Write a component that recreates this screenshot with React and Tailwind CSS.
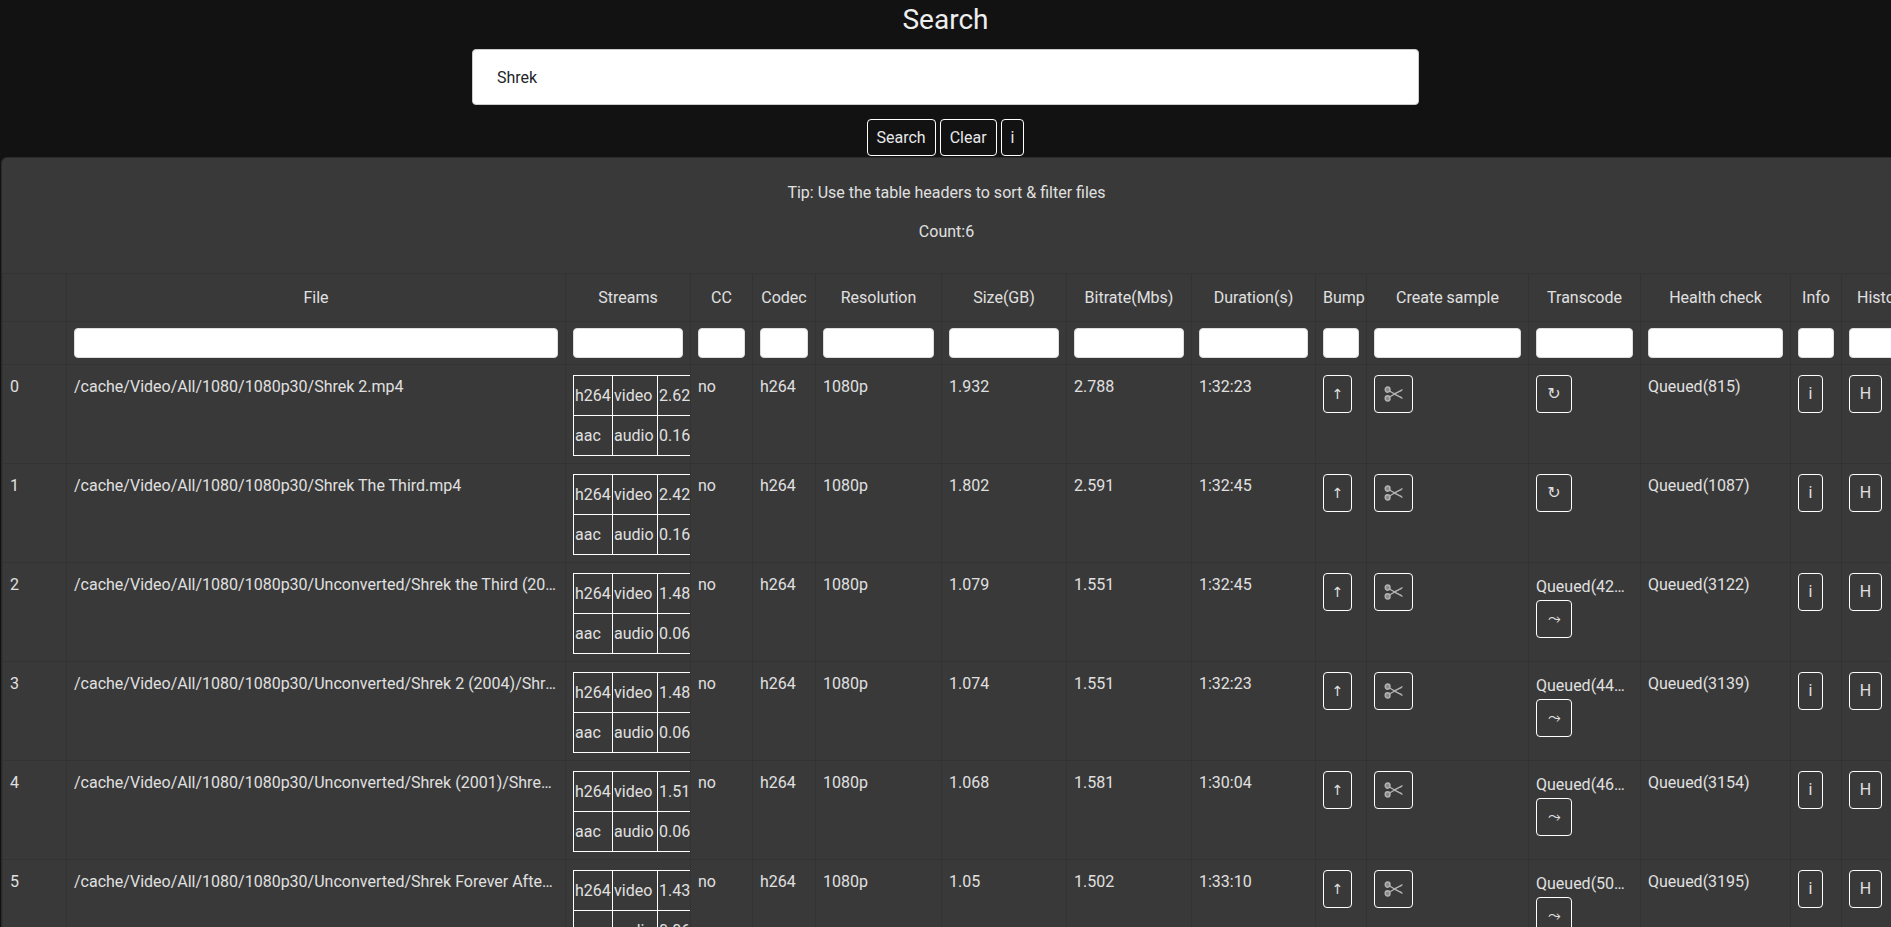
const sans = "font-['Roboto',sans-serif]";

const columns = [
  { name: "", width: "w-[64px]" },
  { name: "File", width: "w-[499px]" },
  { name: "Streams", width: "w-[125px]" },
  { name: "CC", width: "w-[62px]" },
  { name: "Codec", width: "w-[63px]" },
  { name: "Resolution", width: "w-[126px]" },
  { name: "Size(GB)", width: "w-[125px]" },
  { name: "Bitrate(Mbs)", width: "w-[125px]" },
  { name: "Duration(s)", width: "w-[124px]" },
  { name: "Bump", width: "w-[51px]" },
  { name: "Create sample", width: "w-[162px]" },
  { name: "Transcode", width: "w-[112px]" },
  { name: "Health check", width: "w-[150px]" },
  { name: "Info", width: "w-[51px]" },
  { name: "History", width: "w-[82px]" },
];

const files = [
  { file: "/cache/Video/All/1080/1080p30/Shrek 2.mp4", video: "2.624", audio: "0.160", size: "1.932", rate: "2.788", time: "1:32:23", health: "Queued(815)" },
  { file: "/cache/Video/All/1080/1080p30/Shrek The Third.mp4", video: "2.424", audio: "0.160", size: "1.802", rate: "2.591", time: "1:32:45", health: "Queued(1087)" },
  { file: "/cache/Video/All/1080/1080p30/Unconverted/Shrek the Third (2007)/Shrek the Third.mp4", video: "1.482", audio: "0.064", size: "1.079", rate: "1.551", time: "1:32:45", queue: "Queued(4231)", health: "Queued(3122)" },
  { file: "/cache/Video/All/1080/1080p30/Unconverted/Shrek 2 (2004)/Shrek 2.mp4", video: "1.482", audio: "0.064", size: "1.074", rate: "1.551", time: "1:32:23", queue: "Queued(4420)", health: "Queued(3139)" },
  { file: "/cache/Video/All/1080/1080p30/Unconverted/Shrek (2001)/Shrek.mp4", video: "1.514", audio: "0.064", size: "1.068", rate: "1.581", time: "1:30:04", queue: "Queued(4618)", health: "Queued(3154)" },
  { file: "/cache/Video/All/1080/1080p30/Unconverted/Shrek Forever After (2010)/Shrek.mp4", video: "1.432", audio: "0.064", size: "1.05", rate: "1.502", time: "1:33:10", queue: "Queued(5012)", health: "Queued(3195)" },
];

const Scissors = () => (
  <svg width="20" height="16" viewBox="0 0 20 16" fill="none" stroke="#b4b4b4" strokeWidth="1.4" aria-hidden="true">
    <ellipse cx="3.6" cy="3.6" rx="2.4" ry="2.6" fill="#8a8a8a" />
    <ellipse cx="3.6" cy="12.4" rx="2.4" ry="2.6" fill="#8a8a8a" />
    <path d="M5.5 5 L18.5 12.5 M5.5 11 L18.5 3.5" />
    <path d="M9 8 L18 4.6 M9 8 L18 11.4" strokeWidth="0.8" />
  </svg>
);

const IconButton = ({ width, children, className = "" }) => (
  <button type="button" className={`flex h-[38px] ${width} items-center justify-center rounded-[4px] border border-white bg-transparent text-[#e0e0e0] ${className}`}>
    {children}
  </button>
);

const Streams = ({ video, audio }) => (
  <table className="w-[130px] table-fixed border-collapse text-[16px]">
    <tbody>
      {[["h264", "video", video], ["aac", "audio", audio]].map((row) => (
        <tr key={row[0]} className="h-[40px]">
          <td className="w-[39px] overflow-hidden border border-white px-[1px] whitespace-nowrap">{row[0]}</td>
          <td className="w-[45px] overflow-hidden border border-white px-[1px] whitespace-nowrap">{row[1]}</td>
          <td className="w-[46px] overflow-hidden border border-white px-[1px] whitespace-nowrap">{row[2]}</td>
        </tr>
      ))}
    </tbody>
  </table>
);

const cell = "border border-[#333333] px-[7px] pt-[10px] align-top";

export default function App() {
  return (
    <div className={`h-screen w-full overflow-hidden bg-[#121212] text-[16px] text-[#e0e0e0] ${sans}`}>
      <h1 className="pt-[2px] text-center text-[28px] leading-[36px] text-[#eeeeee]">Search</h1>
      <div className="mt-[11px] flex justify-center">
        <input
          readOnly
          value="Shrek"
          className="h-[56px] w-[947px] rounded-[4px] border border-[#cccccc] bg-white pl-[24px] text-[16px] text-[#212529] outline-none"
        />
      </div>
      <div className="mt-[14px] flex justify-center gap-[4px]">
        {["Search", "Clear", "i"].map((label) => (
          <button key={label} type="button" className="h-[37px] rounded-[4px] border border-white px-[9px] text-[#e8e8e8]">
            {label}
          </button>
        ))}
      </div>
      <div className="ml-[1px] mt-[1px] overflow-hidden rounded-tl-[6px] border-l border-t border-[#2a2a2a] bg-[#393939]">
        <p className="pt-[23px] text-center leading-[24px]">Tip: Use the table headers to sort &amp; filter files</p>
        <p className="mt-[15px] pb-[29px] text-center leading-[24px]">Count:6</p>
        <table className="w-[1921px] table-fixed border-collapse">
          <colgroup>
            {columns.map((col) => (
              <col key={col.name} className={col.width} />
            ))}
          </colgroup>
          <thead>
            <tr className="h-[48px]">
              {columns.map((col) => (
                <th key={col.name} className="overflow-hidden border border-[#333333] px-[7px] text-center font-normal whitespace-nowrap">
                  {col.name}
                </th>
              ))}
            </tr>
            <tr className="h-[43px]">
              {columns.map((col) => (
                <td key={col.name} className="border border-[#333333] px-[7px] align-middle">
                  {col.name && <div className="h-[30px] w-full rounded-[4px] border border-[#dddddd] bg-white" />}
                </td>
              ))}
            </tr>
          </thead>
          <tbody>
            {files.map((row, i) => (
              <tr key={row.file} className="h-[99px]">
                <td className={cell}>{i}</td>
                <td className={cell}>
                  <div className="truncate">{row.file}</div>
                </td>
                <td className="overflow-hidden border border-[#333333] pl-[7px] pt-[10px] align-top">
                  <Streams video={row.video} audio={row.audio} />
                </td>
                <td className={cell}>no</td>
                <td className={cell}>h264</td>
                <td className={cell}>1080p</td>
                <td className={cell}>{row.size}</td>
                <td className={cell}>{row.rate}</td>
                <td className={cell}>{row.time}</td>
                <td className={cell}>
                  <IconButton width="w-[29px]">
                    <span className="font-['DejaVu_Sans',sans-serif] text-[14px]">↑</span>
                  </IconButton>
                </td>
                <td className={cell}>
                  <IconButton width="w-[39px]">
                    <Scissors />
                  </IconButton>
                </td>
                <td className={cell}>
                  {row.queue && <div className="truncate leading-[27px]">{row.queue}</div>}
                  <IconButton width="w-[36px]">
                    <span className="font-['DejaVu_Sans',sans-serif] text-[16px]">{row.queue ? "⤳" : "↻"}</span>
                  </IconButton>
                </td>
                <td className={cell}>{row.health}</td>
                <td className={cell}>
                  <IconButton width="w-[25px]">i</IconButton>
                </td>
                <td className={cell}>
                  <IconButton width="w-[33px]">H</IconButton>
                </td>
              </tr>
            ))}
          </tbody>
        </table>
      </div>
    </div>
  );
}
